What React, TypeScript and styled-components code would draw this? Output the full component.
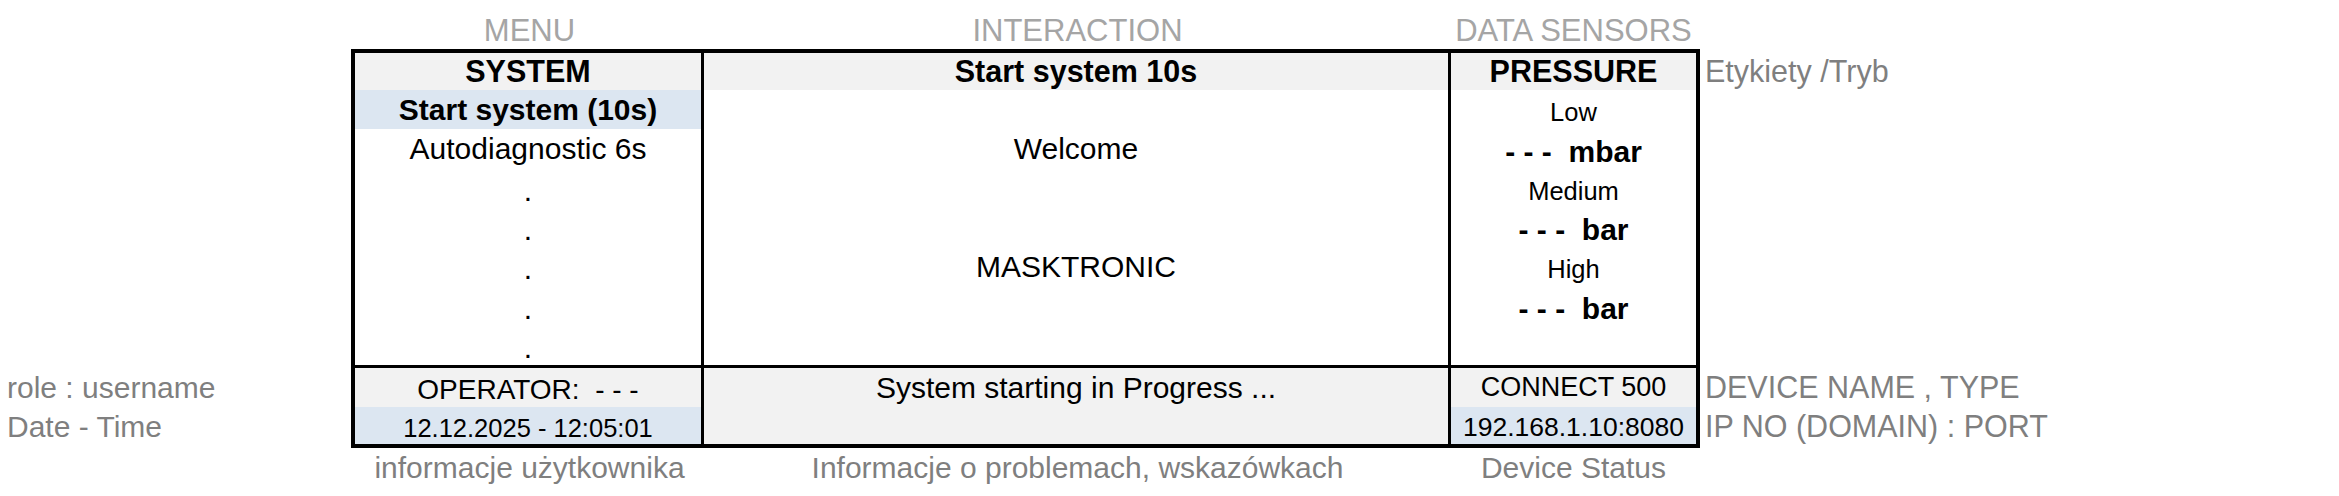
import React, { FC } from 'react'
import styled, { createGlobalStyle } from 'styled-components'

type Tone = 'gray' | 'blue' | 'none'

const toneColor: Record<Tone, string> = {
  gray: '#f2f2f2',
  blue: '#dce6f1',
  none: 'transparent',
}

const App: FC = () => {
  return (
    <Page>
      <GlobalStyles />
      <Empty />
      <ColumnLabels>
        <ColumnLabel $light>MENU</ColumnLabel>
        <ColumnLabel $light>INTERACTION</ColumnLabel>
        <ColumnLabel $light>DATA SENSORS</ColumnLabel>
      </ColumnLabels>
      <Empty />

      <SideLabels>
        <Spacer />
        <SideLabel $h={39}>role : username</SideLabel>
        <SideLabel $h={37} $bottom>Date - Time</SideLabel>
      </SideLabels>

      <Table>
        <HeaderCell $divider>SYSTEM</HeaderCell>
        <HeaderCell $divider>Start system 10s</HeaderCell>
        <HeaderCell>PRESSURE</HeaderCell>

        <BodyCell $divider>
          <Line $tone="blue" $bold>Start system (10s)</Line>
          <Line>Autodiagnostic 6s</Line>
          <Line $bottom>.</Line>
          <Line $bottom>.</Line>
          <Line $bottom>.</Line>
          <Line $bottom>.</Line>
          <Line $bottom>.</Line>
        </BodyCell>
        <BodyCell $divider>
          <Line />
          <Line>Welcome</Line>
          <Line />
          <Line />
          <Line>MASKTRONIC</Line>
          <Line />
          <Line />
        </BodyCell>
        <BodyCell>
          <Line $size={25.5} $bottom $pb={2}>Low</Line>
          <Line $bold $bottom>{'- - -  mbar'}</Line>
          <Line $size={25.5} $bottom $pb={2}>Medium</Line>
          <Line $bold $bottom>{'- - -  bar'}</Line>
          <Line $size={25.5} $bottom $pb={2}>High</Line>
          <Line $bold $bottom>{'- - -  bar'}</Line>
          <Line />
        </BodyCell>

        <FooterCell $divider>
          <Line $tone="gray" $size={28} $bottom $pb={1}>{'OPERATOR:  - - -'}</Line>
          <Line $tone="blue" $size={25.5} $bottom $pb={1}>12.12.2025 - 12:05:01</Line>
        </FooterCell>
        <FooterCell $divider $tone="gray">
          <Line>System starting in Progress ...</Line>
        </FooterCell>
        <FooterCell>
          <Line $tone="gray" $size={27}>CONNECT 500</Line>
          <Line $tone="blue" $size={26.5} $bottom $pb={1}>192.168.1.10:8080</Line>
        </FooterCell>
      </Table>

      <SideLabels $right>
        <SideLabel $h={37}>Etykiety /Tryb</SideLabel>
        <Spacer />
        <SideLabel $h={39}>DEVICE NAME , TYPE</SideLabel>
        <SideLabel $h={37} $bottom>IP NO (DOMAIN) : PORT</SideLabel>
      </SideLabels>

      <Empty />
      <ColumnLabels>
        <ColumnLabel>informacje użytkownika</ColumnLabel>
        <ColumnLabel>Informacje o problemach, wskazówkach</ColumnLabel>
        <ColumnLabel>Device Status</ColumnLabel>
      </ColumnLabels>
      <Empty />
    </Page>
  )
}

export default App

const GlobalStyles = createGlobalStyle`
  html, body {
    margin: 0;
    padding: 0;
    background: #ffffff;
  }
  body {
    font-family: 'Liberation Sans', Arial, sans-serif;
  }
`

const Page = styled.div`
  display: grid;
  grid-template-columns: 351px 1349px 1fr;
  grid-template-rows: 37px 399px 40px;
  padding-top: 12px;
  font-family: 'Liberation Sans', Arial, sans-serif;
`

const Empty = styled.div``

const Spacer = styled.div`
  flex: 1;
`

const ColumnLabels = styled.div`
  display: grid;
  grid-template-columns: 349px 747px 245px;
  padding: 0 4px;
`

const ColumnLabel = styled.div<{ $light?: boolean }>`
  display: flex;
  align-items: center;
  justify-content: center;
  font-size: ${(p) => (p.$light ? 31 : 30)}px;
  color: ${(p) => (p.$light ? '#a5a5a5' : '#7f7f7f')};
  white-space: nowrap;
`

const SideLabels = styled.div<{ $right?: boolean }>`
  display: flex;
  flex-direction: column;
  padding: ${(p) => (p.$right ? '4px 0 4px 5px' : '4px 0 4px 7px')};
  font-size: ${(p) => (p.$right ? 30.5 : 30)}px;
`

const SideLabel = styled.div<{ $h: number; $bottom?: boolean }>`
  height: ${(p) => p.$h}px;
  display: flex;
  align-items: ${(p) => (p.$bottom ? 'flex-end' : 'center')};
  color: #7f7f7f;
  white-space: nowrap;
`

const Table = styled.div`
  display: grid;
  grid-template-columns: 349px 747px 245px;
  grid-template-rows: 37px 278px 76px;
  border: 4px solid #000;
  color: #000;
`

const HeaderCell = styled.div<{ $divider?: boolean }>`
  display: flex;
  align-items: center;
  justify-content: center;
  background: #f2f2f2;
  font-size: 30.5px;
  font-weight: bold;
  border-right: ${(p) => (p.$divider ? '3px solid #000' : 'none')};
  white-space: nowrap;
`

const BodyCell = styled.div<{ $divider?: boolean }>`
  display: grid;
  grid-template-rows: repeat(7, 1fr);
  border-right: ${(p) => (p.$divider ? '3px solid #000' : 'none')};
  border-bottom: 3px solid #000;
`

const FooterCell = styled.div<{ $divider?: boolean; $tone?: Tone }>`
  display: grid;
  grid-template-rows: 39px 37px;
  background: ${(p) => toneColor[p.$tone ?? 'none']};
  border-right: ${(p) => (p.$divider ? '3px solid #000' : 'none')};
`

const Line = styled.div<{
  $tone?: Tone
  $bold?: boolean
  $size?: number
  $bottom?: boolean
  $pb?: number
}>`
  display: flex;
  align-items: ${(p) => (p.$bottom ? 'flex-end' : 'center')};
  justify-content: center;
  padding-bottom: ${(p) => p.$pb ?? 0}px;
  background: ${(p) => toneColor[p.$tone ?? 'none']};
  font-size: ${(p) => p.$size ?? 30}px;
  font-weight: ${(p) => (p.$bold ? 'bold' : 'normal')};
  white-space: pre;
`
